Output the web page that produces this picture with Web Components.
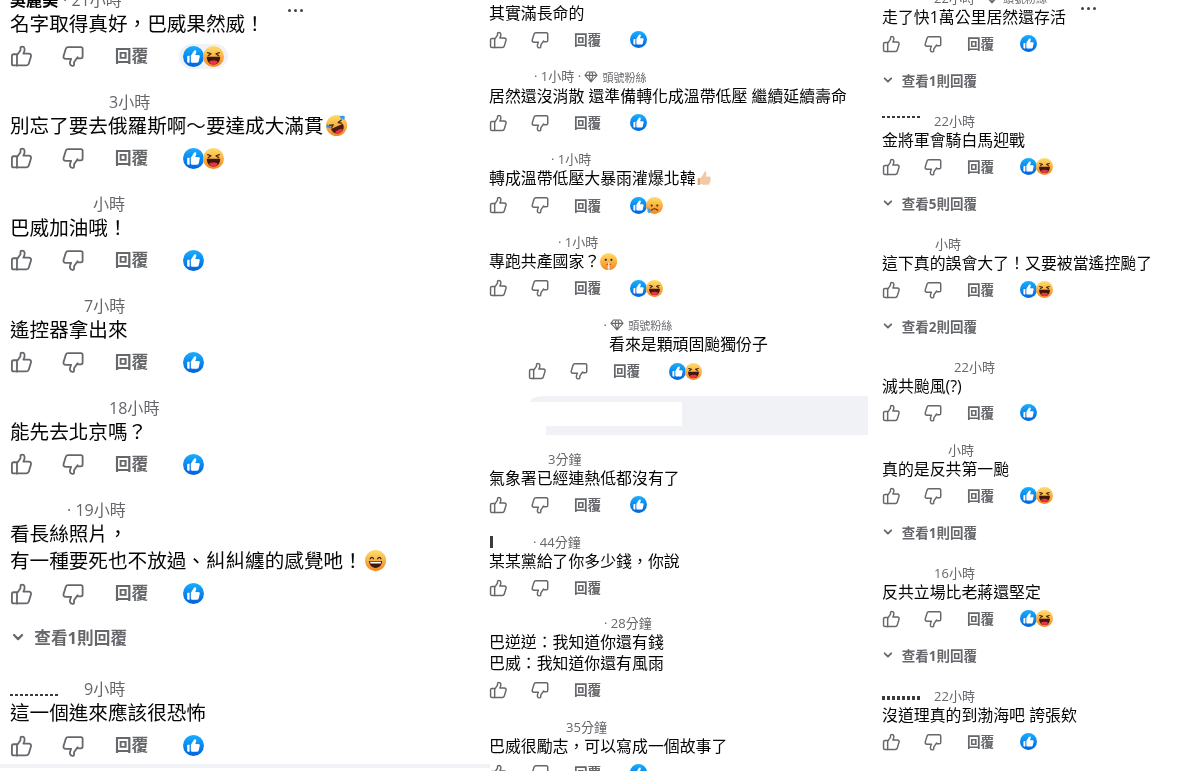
<!DOCTYPE html>
<html lang="zh-Hant">
<head>
<meta charset="UTF-8">
<title>留言</title>
<style>
  html,body{margin:0;height:771px;overflow:hidden;background:#fff}
  body{font-family:"Open Sans","Noto Sans CJK TC",sans-serif}
</style>
</head>
<body>

<script>
  const LIKE = `<svg viewBox="0 0 20 20" width="100%" height="100%"><path d="M6.2 9.2 9.3 4.6V2.8c0-1.6 3-1.9 3.6.3.4 1.5-.2 3-1 4.6h4.8c1.6 0 2.3 1.2 1.9 2.6l-1.9 6.2c-.3 1-1 1.6-2.1 1.6H3.2c-.9 0-1.5-.6-1.5-1.5v-6.9c0-.9.6-1.5 1.5-1.5h3zM6.2 9.2v9.2" fill="none" stroke="#65676b" stroke-width="1.6" stroke-linejoin="round" stroke-linecap="round"/></svg>`;

  const DISLIKE = `<svg viewBox="0 0 20 20" width="100%" height="100%"><path d="M6.2 9.2 9.3 4.6V2.8c0-1.6 3-1.9 3.6.3.4 1.5-.2 3-1 4.6h4.8c1.6 0 2.3 1.2 1.9 2.6l-1.9 6.2c-.3 1-1 1.6-2.1 1.6H3.2c-.9 0-1.5-.6-1.5-1.500v-6.900c0-.9.6-1.500 1.500-1.500h3z" transform="rotate(180 10 10)" fill="none" stroke="#65676b" stroke-width="1.6" stroke-linejoin="round"/></svg>`;

  const GEM = `<svg viewBox="0 0 14 12" width="14" height="12"><path d="M3.4 1h7.2L13 4.4 7 11 1 4.4zM1 4.4h12M5 4.4 7 11l2-6.6M5 4.4 6.2 1M9 4.4 7.8 1" fill="none" stroke="#65676b" stroke-width="1.1" stroke-linejoin="round"/></svg>`;

  const FACE = `<defs><linearGradient id="f" x1="0" y1="0" x2="0" y2="1"><stop offset="0" stop-color="#fede6b"/><stop offset="1" stop-color="#f5851f"/></linearGradient></defs><circle cx="10" cy="10" r="10" fill="url(#f)"/>`;

  const PICS = {
    like: `<defs><linearGradient id="b" x1="0" y1="0" x2="0" y2="1"><stop offset="0" stop-color="#18afff"/><stop offset="1" stop-color="#0062df"/></linearGradient></defs><circle cx="10" cy="10" r="10" fill="url(#b)"/><path d="M6.3 9.3H4.9c-.5 0-.9.4-.9.9v4.8c0 .5.4.9.9.9h1.4zM7.5 9.2 10.2 5c.4-.6.8-1 1.3-1 .8 0 1.2.7 1.2 1.3 0 1.1-.6 2.3-1 3.2h3c.9 0 1.5.8 1.3 1.6l-1 4.5c-.2.8-.8 1.3-1.5 1.3H8.5c-.6 0-1-.4-1-1z" fill="#fff"/>`,
    haha: `${FACE}<path d="M4.4 6.4 7.6 7.4 5 9.2M15.6 6.4 12.4 7.400 15 9.200" fill="none" stroke="#40250c" stroke-width="1.200" stroke-linecap="round" stroke-linejoin="round"/><path d="M3.600 10.200h12.800c0 4.800-2.800 7.500-6.400 7.500s-6.400-2.700-6.400-7.500z" fill="#40170c"/><path d="M5.800 15.200c1.200-1.700 7.200-1.700 8.400 0-1 1.600-2.600 2.500-4.200 2.500s-3.200-.9-4.200-2.500z" fill="#f0304a"/>`,
    sad: `${FACE}<circle cx="6.700" cy="10" r="1.200" fill="#40250c"/><circle cx="13.300" cy="10" r="1.200" fill="#40250c"/><path d="M6.500 15.500c1.800-2.200 5.200-2.200 7 0" fill="none" stroke="#40250c" stroke-width="1.400" stroke-linecap="round"/><path d="M3.500 12.500c1.500 2 2.200 3.200 2.200 4.200a2 2 0 0 1-4 0c0-1 .8-2.200 1.800-4.200z" fill="#3aa0f0"/>`,
    rofl: `${FACE}<g transform="rotate(-24 10 10)"><path d="M3.800 7 7.400 8 4.800 9.800M16.200 7 12.600 8 15.200 9.800" fill="none" stroke="#40250c" stroke-width="1.200" stroke-linecap="round" stroke-linejoin="round"/><path d="M3.800 10.800h12.400c0 4.300-2.600 6.800-6.200 6.800s-6.200-2.500-6.200-6.800z" fill="#4b1a10"/><path d="M6 15.500c1.200-1.500 6.800-1.500 8 0-1 1.400-2.500 2.100-4 2.100s-3-.7-4-2.100z" fill="#e5334b"/></g><path d="M1 8.500c1.500 1.500 3.500 2.500 4.500 3.500-1.800.8-4 .6-5-.4-.6-1 0-2 .5-3.100zM12.500 1.200c1 1.500 3 3 4.500 3.300.8-1.200 1-2.600.4-3.500-1.200-.6-3.400-.4-4.900.2z" fill="#2f9bf0"/>`,
    grin: `${FACE}<path d="M5 8.200c.6-1.600 2.300-1.600 3 0M12 8.200c.7-1.600 2.400-1.600 3 0" fill="none" stroke="#40250c" stroke-width="1.300" stroke-linecap="round"/><path d="M3.800 10.500h12.400c-.2 4-2.800 6.400-6.200 6.400s-6-2.400-6.200-6.400z" fill="#40170c"/><path d="M4.700 11h10.600l-.5 1.800H5.200z" fill="#fff"/>`,
    hush: `${FACE}<circle cx="6.700" cy="8" r="1.300" fill="#40250c"/><circle cx="13.300" cy="8" r="1.300" fill="#40250c"/><ellipse cx="10" cy="13" rx="2.200" ry="1.400" fill="#8c3a12"/><path d="M9 19.500v-7.500c0-1.200 2.200-1.200 2.200 0v7.500z" fill="#f7e6d8"/>`,
    thumb: `<path d="M4.800 9.500c1.800-1.300 3.800-3.800 4.600-7 .3-1.300 2.500-1 2.700.6.200 1.500-.2 3.100-.7 4.400h4.300c1.600 0 2 2.100.8 2.700 1 .7.800 2.200-.2 2.600.6.800.3 2.100-.7 2.400.3 1.100-.4 2-1.500 2H8.800c-1.800 0-3-.6-4-1.400z" fill="#f3c9a5"/><path d="M2 9.500h2.800v8H2z" fill="#dba67f"/>`
  };

  class xEmoji extends HTMLElement {
    connectedCallback () {
      let shadowRoot = this.attachShadow({mode: 'open'});
      shadowRoot.innerHTML = `
        <style>
          :host {display: inline-block; width: var(--size, 1.08em); height: var(--size, 1.08em); vertical-align: -0.16em; line-height: 0;}
          svg {width: 100%; height: 100%; display: block;}
        </style>
        <svg viewBox="0 0 20 20">${PICS[this.getAttribute('kind')]}</svg>
      `;
    }
  }
  customElements.define('x-emoji', xEmoji);

  class xActions extends HTMLElement {
    connectedCallback () {
      let shadowRoot = this.attachShadow({mode: 'open'});
      let kinds = (this.getAttribute('react') || '').split(' ').filter(Boolean);
      let badges = kinds.map(k => `<x-emoji kind="${k}"></x-emoji>`).join('');
      shadowRoot.innerHTML = `
        <style>
          :host {display: grid; grid-template-columns: 2.67em 2.67em 3.5em auto; align-items: center; justify-content: start; height: 1.54em; margin-top: .27em; color: #65676b;}
          .ic {width: 1.15em; height: 1.15em; display: block;}
          .reply {font-size: .86em; font-weight: 700; line-height: 1;}
          .react {display: flex; align-items: center; --size: 1.07em; position: relative; margin-left: var(--badge-x, 0);}
          .react x-emoji + x-emoji {margin-left: -.04em;}
          .pill {padding: .1em .2em; margin: -.1em -.2em; background: #f0f2f5; border-radius: 1em;}
        </style>
        <span class="ic">${LIKE}</span>
        <span class="ic">${DISLIKE}</span>
        <span class="reply">回覆</span>
        <span class="react ${this.hasAttribute('pill') ? 'pill' : ''}">${badges}</span>
      `;
    }
  }
  customElements.define('x-actions', xActions);

  class xComment extends HTMLElement {
    connectedCallback () {
      let a = n => this.getAttribute(n);
      let dash = (a('dash') || '').split(',');
      let fan = this.hasAttribute('fan');
      let dots = a('dots');
      let react = a('react');
      let name = a('name');
      let shadowRoot = this.attachShadow({mode: 'open'});
      shadowRoot.innerHTML = `
        <style>
          :host {display: block; position: relative; margin-bottom: var(--gap, 1.05em);}
          .meta {display: flex; align-items: center; height: 1.03em; padding-left: ${a('indent') || 0}px; font-size: 1em; white-space: nowrap;}
          .meta.named {padding-left: 0;}
          .time {font-size: .82em; line-height: 1; color: #65676b;}
          .name {font-size: .82em; line-height: 1; font-weight: 700; color: #050505; margin-right: .3em;}
          .fan {font-size: 11px; margin-left: 4px; color: #65676b;}
          .dash {position: absolute; left: ${dash[1] || 0}px; top: ${dash[2] || 0}px; height: ${dash[3] || 3}px; width: ${dash[0] || 0}px;
            background: repeating-linear-gradient(90deg, #3a3b3c 0 3px, #fff 3px 5px);}
          .text {font-size: 1em; line-height: 1.23em; padding-top: .09em; color: #050505; padding-left: var(--text-in, 0); white-space: nowrap;}
          x-actions {padding-left: var(--act-in, 0);}
          .dots {position: absolute; display: flex; gap: 3px; left: ${(dots || '').split(',')[0]}px; top: ${(dots || '').split(',')[1]}px;}
          .dots i {width: 3px; height: 3px; border-radius: 50%; background: #444;}
        </style>
        ${a('dash') ? '<span class="dash"></span>' : ''}
        <div class="meta ${name ? 'named' : ''}">
          ${name ? `<span class="name">${name}</span>` : ''}
          <span class="time">${a('time') || ''}</span>
          ${fan ? `<span class="time">&nbsp;·&nbsp;</span>${GEM}<span class="fan">頭號粉絲</span>` : ''}
        </div>
        <div class="text"><slot></slot></div>
        <x-actions react="${react || ''}" ${this.hasAttribute('pill') ? 'pill' : ''}></x-actions>
        ${dots ? '<span class="dots"><i></i><i></i><i></i></span>' : ''}
      `;
    }
  }
  customElements.define('x-comment', xComment);

  class xMore extends HTMLElement {
    connectedCallback () {
      let shadowRoot = this.attachShadow({mode: 'open'});
      shadowRoot.innerHTML = `
        <style>
          :host {display: flex; align-items: center; height: 1.23em; margin: -.15em 0 var(--more-b, 1.45em); color: #65676b; font-weight: 700;}
          svg {width: .62em; height: .62em; margin-left: .08em; margin-right: .54em; flex: none;}
          span {font-size: .85em;}
        </style>
        <svg viewBox="0 0 12 12"><path d="M2 4l4 4 4-4" fill="none" stroke="#65676b" stroke-width="2.200" stroke-linecap="round" stroke-linejoin="round"/></svg>
        <span><slot></slot></span>
      `;
    }
  }
  customElements.define('x-more', xMore);

  class xMasked extends HTMLElement {
    connectedCallback () {
      let shadowRoot = this.attachShadow({mode: 'open'});
      shadowRoot.innerHTML = `
        <style>
          :host {display: block; position: relative; height: 39px; margin: -4px 14px 16px 57px; background: #f0f2f5;}
          div {width: 136px; height: 24px; background: #fff; position: relative; top: 6px;}
          i {position: absolute; left: -16px; top: 0; width: 16px; height: 6px; background: #f0f2f5; border-top-left-radius: 14px 6px;}
        </style>
        <i></i><div></div>
      `;
    }
  }
  customElements.define('x-masked', xMasked);

  class xCol extends HTMLElement {
    connectedCallback () {
      let shadowRoot = this.attachShadow({mode: 'open'});
      shadowRoot.innerHTML = `
        <style>
          :host {display: block; font-size: ${this.getAttribute('size')}px; margin-top: ${this.getAttribute('top')}px; padding-left: ${this.getAttribute('left') || 0}px;}
        </style>
        <slot></slot>
      `;
    }
  }
  customElements.define('x-col', xCol);

  class xBoard extends HTMLElement {
    connectedCallback () {
      let shadowRoot = this.attachShadow({mode: 'open'});
      shadowRoot.innerHTML = `
        <style>
          :host {display: grid; grid-template-columns: 489px 393px 1fr; height: 771px; overflow: hidden; filter: blur(.35px);}
        </style>
        <slot></slot>
      `;
    }
  }
  customElements.define('x-board', xBoard);
</script>

<x-board>
  <x-col size="19.6" top="-10" left="10" style="--more-b:1.57em">
    <x-comment name="吳麗美" time="· 21小時" react="like haha" pill dots="278,19">名字取得真好&#xFF0C;巴威果然威&#xFF01;</x-comment>
    <x-comment indent="99" time="3小時" react="like haha">別忘了要去俄羅斯啊～要達成大滿貫<x-emoji kind="rofl" style="margin-left:2px"></x-emoji></x-comment>
    <x-comment indent="83" time="小時" react="like">巴威加油哦&#xFF01;</x-comment>
    <x-comment indent="74" time="7小時" react="like">遙控器拿出來</x-comment>
    <x-comment indent="99" time="18小時" react="like">能先去北京嗎&#xFF1F;</x-comment>
    <x-comment indent="57" time="· 19小時" react="like" style="--gap:18.500px">看長絲照片&#xFF0C;<div style="margin-top:3px">有一種要死也不放過、糾糾纏的感覺吔&#xFF01;<x-emoji kind="grin" style="margin-left:2px"></x-emoji></div></x-comment>
    <x-more>查看1則回覆</x-more>
    <x-comment indent="74" time="9小時" react="like" dash="50,0,15,2" style="--gap:3px">這一個進來應該很恐怖</x-comment>
    <div style="height:4px;background:#f0f2f5;margin-left:-10px;width:490px"></div>
  </x-col>

  <x-col size="15.9" top="-14">
    <x-comment react="like">其實滿長命的</x-comment>
    <x-comment indent="45" time="· 1小時" fan react="like">居然還沒消散 還準備轉化成溫帶低壓 繼續延續壽命</x-comment>
    <x-comment indent="62" time="· 1小時" react="like sad">轉成溫帶低壓大暴雨灌爆北韓<x-emoji kind="thumb"></x-emoji></x-comment>
    <x-comment indent="69" time="· 1小時" react="like haha">專跑共產國家&#xFF1F;<x-emoji kind="hush"></x-emoji></x-comment>
    <x-comment indent="111" fan react="like haha" style="--text-in:120px;--act-in:39px">看來是顆頑固颱獨份子</x-comment>
    <x-masked></x-masked>
    <x-comment indent="59" time="3分鐘" react="like">氣象署已經連熱低都沒有了</x-comment>
    <x-comment indent="44" time="· 44分鐘" dash="3,1,2,12" style="--gap:15.500px">某某黨給了你多少錢&#xFF0C;你說</x-comment>
    <x-comment indent="115" time="· 28分鐘">巴逆逆&#xFF1A;我知道你還有錢<div style="margin-top:1px">巴威&#xFF1A;我知道你還有風雨</div></x-comment>
    <x-comment indent="77" time="35分鐘" react="like">巴威很勵志&#xFF0C;可以寫成一個故事了</x-comment>
  </x-col>

  <x-col size="15.9" top="-10" style="--badge-x:-3px">
    <x-comment indent="52" time="22小時" fan react="like" dots="199,17">走了快1萬公里居然還存活</x-comment>
    <x-more>查看1則回覆</x-more>
    <x-comment indent="52" time="22小時" react="like haha" dash="40,0,3,2">金將軍會騎白馬迎戰</x-comment>
    <x-more>查看5則回覆</x-more>
    <x-comment indent="53" time="小時" react="like haha">這下真的誤會大了&#xFF01;又要被當遙控颱了</x-comment>
    <x-more>查看2則回覆</x-more>
    <x-comment indent="72" time="22小時" react="like">滅共颱風(?)</x-comment>
    <x-comment indent="66" time="小時" react="like haha">真的是反共第一颱</x-comment>
    <x-more>查看1則回覆</x-more>
    <x-comment indent="52" time="16小時" react="like haha">反共立場比老蔣還堅定</x-comment>
    <x-more>查看1則回覆</x-more>
    <x-comment indent="52" time="22小時" react="like" dash="40,0,8,4">沒道理真的到渤海吧 誇張欸</x-comment>
  </x-col>
</x-board>

</body>
</html>
